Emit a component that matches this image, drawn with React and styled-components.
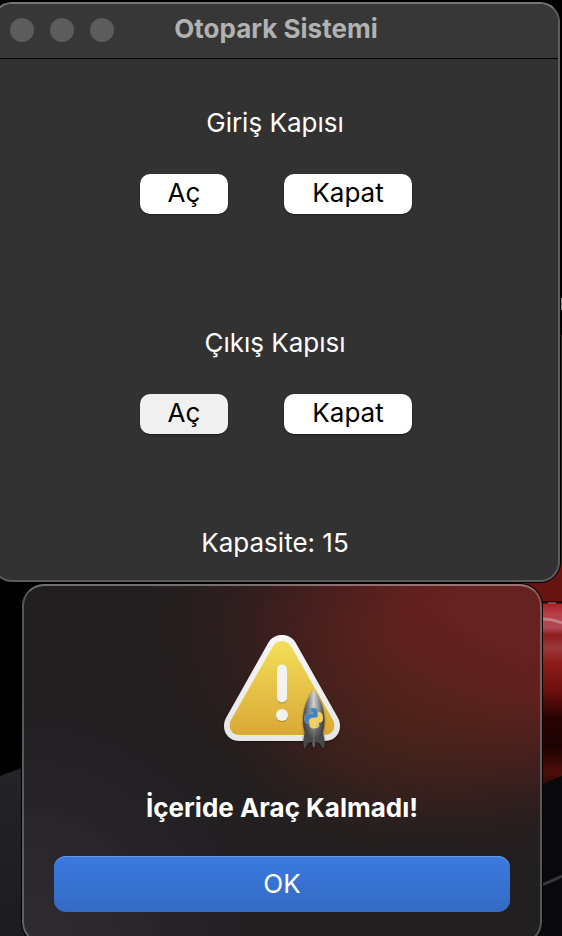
import React from "react";
import styled, { createGlobalStyle } from "styled-components";

const GlobalStyle = createGlobalStyle`
  *, *::before, *::after { box-sizing: border-box; }
  body {
    margin: 0;
    background: #000;
    font-family: Inter, "Liberation Sans", sans-serif;
    -webkit-font-smoothing: antialiased;
  }
`;

const Desktop = styled.div`
  position: relative;
  isolation: isolate;
  height: 100vh;
  padding: 2px 2px 0 0;
  overflow: hidden;
  background: #000;
`;

const WallpaperArt = styled.svg`
  position: absolute;
  inset: 0;
  z-index: -1;
  width: 100%;
  height: 100%;
`;

const Window = styled.main`
  margin-left: -8px;
  border: 2px solid #5c5c5c;
  border-top-color: #777;
  border-radius: 20px;
  background: #323232;
  box-shadow: 0 0 0 1px #000;
  overflow: hidden;
`;

const TitleBar = styled.header`
  display: grid;
  grid-template-columns: 1fr auto 1fr;
  align-items: center;
  height: 55px;
  padding: 0 0 2px 16px;
  border-bottom: 1px solid #000;
  background: #373737;
`;

const Lights = styled.div`
  display: flex;
  gap: 16px;
`;

const Light = styled.button`
  width: 24px;
  height: 24px;
  padding: 0;
  border: 0;
  border-radius: 50%;
  background: #5c5c5c;
`;

const Title = styled.h1`
  margin: 0 16px 0 0;
  padding-bottom: 2px;
  color: #b2b2b2;
  font-size: 26px;
  font-weight: 700;
  line-height: 32px;
`;

const Content = styled.div`
  display: flex;
  flex-direction: column;
  align-items: center;
  padding: 44px 0 17px;
`;

const Gate = styled.section`
  display: flex;
  flex-direction: column;
  align-items: center;
  gap: 31px;
  margin-bottom: ${(p) => p.$after}px;
`;

const Label = styled.h2`
  margin: 0;
  padding-right: 2px;
  color: #fff;
  font-size: 26px;
  font-weight: 400;
  line-height: 40px;
`;

const Capacity = styled(Label).attrs({ as: "p" })``;

const Actions = styled.div`
  display: flex;
  gap: 56px;
`;

const PushButton = styled.button`
  min-width: ${(p) => (p.$wide ? 128 : 88)}px;
  height: 40px;
  padding: 0 0 2px;
  border: 0;
  border-radius: 10px;
  background: ${(p) => (p.$active ? "#f0f0f0" : "#fff")};
  box-shadow: 0 1px 2px rgba(0, 0, 0, 0.45);
  color: #000;
  font-family: inherit;
  font-size: 26px;
  line-height: 38px;
`;

const Dialog = styled.section`
  display: flex;
  flex-direction: column;
  align-items: center;
  margin: 2px 18px 0 22px;
  padding: 48px 30px 30px;
  border: 2px solid rgba(255, 255, 255, 0.25);
  border-top-color: rgba(255, 255, 255, 0.36);
  border-radius: 22px;
  background:
    radial-gradient(circle at 0% 100%, rgba(48, 46, 52, 0.9), rgba(48, 46, 52, 0) 38%),
    radial-gradient(ellipse 34% 34% at 72% 40%, rgba(76, 38, 24, 0.5), rgba(76, 38, 24, 0)),
    radial-gradient(ellipse 76% 68% at 94% 12%, #662221 0%, #62211f 28%, rgba(90, 31, 29, 0.72) 48%, rgba(74, 29, 28, 0.42) 68%, rgba(52, 28, 28, 0.2) 85%, rgba(44, 30, 30, 0) 100%),
    #211f20;
  background-origin: border-box;
  box-shadow: 0 0 0 1px #000;
`;

const AlertIcon = styled.svg`
  display: block;
  width: 120px;
  height: 120px;
`;

const Message = styled.h2`
  margin: 34px 0 28px;
  color: #fff;
  font-size: 26px;
  font-weight: 700;
  line-height: 40px;
`;

const PrimaryButton = styled.button`
  align-self: stretch;
  height: 56px;
  padding: 0 0 2px;
  border: 0;
  border-radius: 12px;
  background: linear-gradient(#3b7adf, #336ac4);
  box-shadow: inset 0 1px 0 #6599e8;
  color: #fff;
  font-family: inherit;
  font-size: 26px;
`;

function Wallpaper() {
  return (
    <WallpaperArt viewBox="0 0 562 936" preserveAspectRatio="xMaxYMin slice" aria-hidden="true">
      <defs>
        <linearGradient id="fender" x1="0" y1="0" x2="0" y2="1">
          <stop offset="0" stopColor="#a8202a" />
          <stop offset="0.06" stopColor="#b8404a" />
          <stop offset="0.13" stopColor="#b04a55" />
          <stop offset="0.17" stopColor="#8e1a1c" />
          <stop offset="0.24" stopColor="#9a3a3c" />
          <stop offset="0.32" stopColor="#8e1c18" />
          <stop offset="0.48" stopColor="#6c0f0c" />
          <stop offset="0.62" stopColor="#2a0303" />
          <stop offset="0.78" stopColor="#1d0202" />
          <stop offset="0.93" stopColor="#4d0d08" />
          <stop offset="1" stopColor="#2a0806" />
        </linearGradient>
        <linearGradient id="road" x1="0" y1="0" x2="0" y2="1">
          <stop offset="0" stopColor="#242327" />
          <stop offset="1" stopColor="#1c1b1f" />
        </linearGradient>
      </defs>
      <rect width="562" height="936" fill="#000" />
      <path d="M0 776 L24 767 V936 H0Z" fill="url(#road)" />
      <path d="M561 298 h1 v12 h-1z" fill="#8d8d8d" />
      <path d="M561 335 h1 v225 h-1z" fill="#5a1010" />
      <path d="M500 560 H562 V604 H500Z" fill="#65140f" />
      <path d="M540 602 H562" stroke="#22080a" strokeWidth="2" />
      <path d="M548 603 h8" stroke="#c77d7d" />
      <path d="M540 604 H562 V776 L540 786Z" fill="url(#fender)" />
      <path d="M542 619 Q553 619 562 623" stroke="#cfa2a5" strokeWidth="3" fill="none" opacity="0.6" />
      <path d="M540 786 L562 777 V936 H540Z" fill="#09090b" />
      <path d="M540 886 L562 876" stroke="#39373c" strokeWidth="3" />
    </WallpaperArt>
  );
}

const snake =
  "M14.25.18l.9.2.73.26.59.3.45.32.34.34.25.34.16.33.1.3.04.26.02.2-.01.13V8.5l-.05.63-.13.55-.21.46-.26.38-.3.31-.33.25-.35.19-.35.14-.33.1-.3.07-.26.04-.21.02H8.77l-.69.05-.59.14-.5.22-.41.27-.33.32-.27.35-.2.36-.15.37-.1.35-.07.32-.04.27-.02.21v3.06H3.17l-.21-.03-.28-.07-.32-.12-.35-.18-.36-.26-.36-.36-.35-.46-.32-.59-.28-.73-.21-.88-.14-1.05-.05-1.23.06-1.22.16-1.04.24-.87.32-.71.36-.57.4-.44.42-.33.42-.24.4-.16.36-.1.32-.05.24-.01h.16l.06.01h8.16v-.83H6.18l-.01-2.75-.02-.37.05-.34.11-.31.17-.28.25-.26.31-.23.38-.2.44-.18.51-.15.58-.12.64-.1.71-.06.77-.04.84-.02 1.27.05zm-6.3 1.98l-.23.33-.08.41.08.41.23.34.33.22.41.09.41-.09.33-.22.23-.34.08-.41-.08-.41-.23-.33-.33-.22-.41-.09-.41.09z";

function WarningIcon() {
  return (
    <AlertIcon viewBox="0 0 120 120" role="img" aria-label="Uyarı">
      <defs>
        <linearGradient id="frame" x1="0" y1="0" x2="0" y2="1">
          <stop offset="0" stopColor="#f7f7f7" />
          <stop offset="1" stopColor="#e6e6e6" />
        </linearGradient>
        <linearGradient id="sign" x1="0" y1="0" x2="0" y2="1">
          <stop offset="0" stopColor="#f4df59" />
          <stop offset="1" stopColor="#d9a835" />
        </linearGradient>
        <linearGradient id="hull" x1="0" y1="0" x2="1" y2="0">
          <stop offset="0" stopColor="#454545" />
          <stop offset="0.22" stopColor="#777" />
          <stop offset="0.5" stopColor="#d2d2d2" />
          <stop offset="0.75" stopColor="#8d8d8d" />
          <stop offset="1" stopColor="#393939" />
        </linearGradient>
        <linearGradient id="hullShade" x1="0" y1="0" x2="0" y2="1">
          <stop offset="0.45" stopColor="#333" stopOpacity="0" />
          <stop offset="1" stopColor="#333" stopOpacity="0.75" />
        </linearGradient>
        <filter id="drop" x="-20%" y="-20%" width="140%" height="140%">
          <feDropShadow dx="0" dy="1" stdDeviation="1" floodColor="#000" floodOpacity="0.5" />
        </filter>
        <filter id="mark" x="-40%" y="-20%" width="180%" height="140%">
          <feDropShadow dx="0" dy="1" stdDeviation="0.6" floodColor="#8a6a10" floodOpacity="0.7" />
        </filter>
      </defs>
      <path
        filter="url(#drop)"
        fill="url(#frame)"
        d="M46.5 8.5C52-1.5 68-1.5 73.5 8.5L116 84C121.5 95 115 107 103 107H17C5 107-1.5 95 4 84Z"
      />
      <path
        fill="url(#sign)"
        d="M50.5 13C54.5 5 65.5 5 69.5 13L111 86C114.5 93 111 101 102 101H18C9 101 5.5 93 9 86Z"
      />
      <g filter="url(#mark)" fill="#f2f2ee">
        <rect x="55" y="30.5" width="10" height="38" rx="5" />
        <circle cx="60" cy="81" r="6" />
      </g>
      <g filter="url(#drop)">
        <path
          fill="#484848"
          d="M83 98C81.500 103 80.500 110 82.500 115L86 109L90 108V111L91.800 114L93.500 111V108L97.500 109L101.500 115C103.700 110 102.500 103 100.500 98Z"
        />
        <path d="M91.800 99V113" stroke="#777" />
        <path fill="url(#hull)" d="M91.700 55.500C85 64 81 75 81 86C81 93 82.500 99 85 103H98.500C101 99 102.400 93 102.400 86C102.400 75 98.500 64 91.700 55.500Z" />
        <path fill="url(#hullShade)" d="M91.700 55.500C85 64 81 75 81 86C81 93 82.500 99 85 103H98.500C101 99 102.400 93 102.400 86C102.400 75 98.500 64 91.700 55.500Z" />
      </g>
      <g transform="translate(82.500 74) rotate(-6 9 10) scale(0.760 0.840)">
        <path d={snake} fill="#4781b8" stroke="#86aed0" strokeWidth="0.600" />
        <path d={snake} fill="#f3cf55" stroke="#f6e49a" strokeWidth="0.600" transform="rotate(180 12 12)" />
      </g>
    </AlertIcon>
  );
}

export default function App() {
  return (
    <>
      <GlobalStyle />
      <Desktop>
        <Wallpaper />
        <Window>
          <TitleBar>
            <Lights>
              <Light aria-label="Pencereyi kapat" />
              <Light aria-label="Küçült" />
              <Light aria-label="Büyüt" />
            </Lights>
            <Title>Otopark Sistemi</Title>
          </TitleBar>
          <Content>
            <Gate $after={109}>
              <Label>Giriş Kapısı</Label>
              <Actions>
                <PushButton>Aç</PushButton>
                <PushButton $wide>Kapat</PushButton>
              </Actions>
            </Gate>
            <Gate $after={89}>
              <Label>Çıkış Kapısı</Label>
              <Actions>
                <PushButton $active>Aç</PushButton>
                <PushButton $wide>Kapat</PushButton>
              </Actions>
            </Gate>
            <Capacity>Kapasite: 15</Capacity>
          </Content>
        </Window>
        <Dialog role="alertdialog" aria-labelledby="alert-message">
          <WarningIcon />
          <Message id="alert-message">İçeride Araç Kalmadı!</Message>
          <PrimaryButton>OK</PrimaryButton>
        </Dialog>
      </Desktop>
    </>
  );
}
